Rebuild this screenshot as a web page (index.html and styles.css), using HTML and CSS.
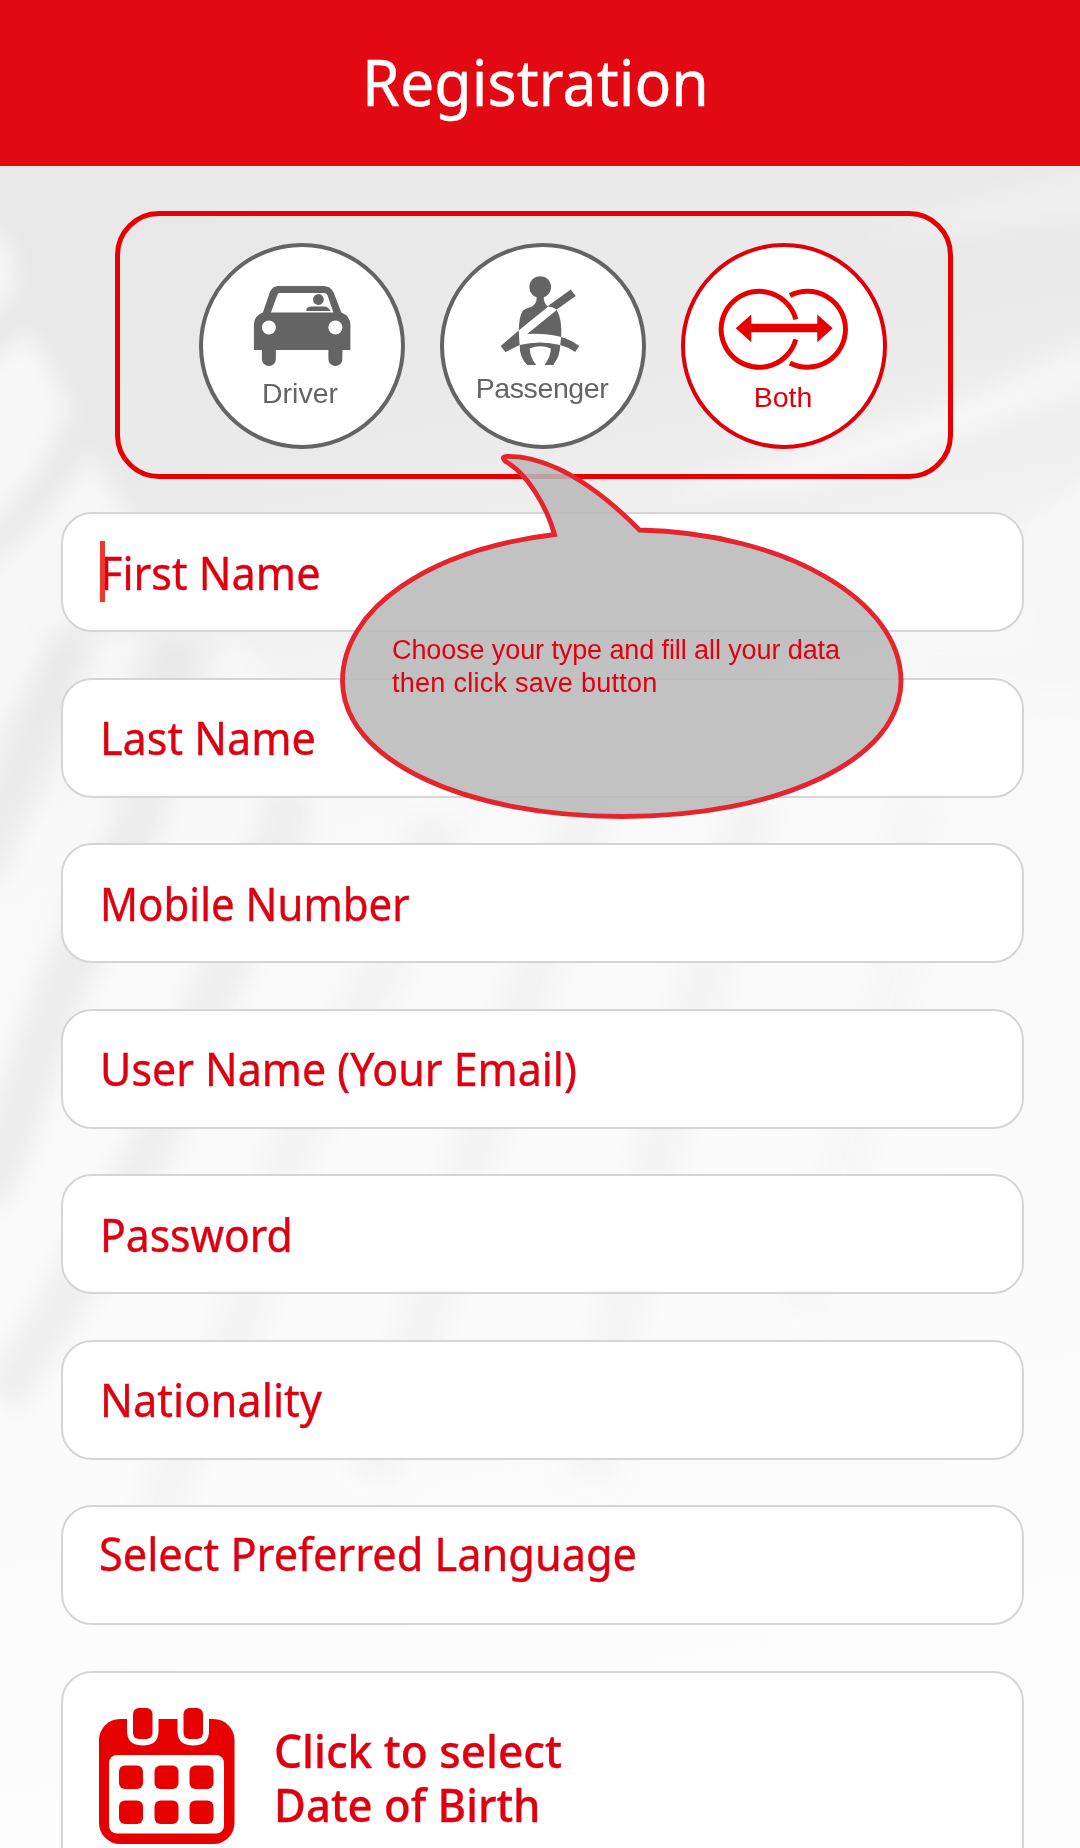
FILE: index.html
```html
<!DOCTYPE html>
<html lang="en">
<head>
<meta charset="utf-8">
<title>Registration</title>
<link rel="stylesheet" href="styles.css">
</head>
<body>
<div class="screen">
  <svg class="backdrop" viewBox="0 0 1080 1848" aria-hidden="true">
    <defs>
      <linearGradient id="base" x1="0" y1="0" x2="0.12" y2="1">
        <stop offset="0" stop-color="#e7e7e7"/>
        <stop offset="0.27" stop-color="#eaeaea"/>
        <stop offset="0.37" stop-color="#f1f1f1"/>
        <stop offset="0.45" stop-color="#f9f9f9"/>
        <stop offset="1" stop-color="#fdfdfd"/>
      </linearGradient>
      <filter id="soft" filterUnits="userSpaceOnUse" x="-60" y="100" width="1200" height="1800"><feGaussianBlur stdDeviation="11"/></filter>
    </defs>
    <rect width="1080" height="1848" fill="url(#base)"/>
    <g filter="url(#soft)">
      <g fill="#f7f7f7">
        <path d="M-20 225L8 240L16 290L-20 330Z"/>
        <path d="M30 330L70 408L40 470L-20 540V370Z"/>
        <path d="M90 455L130 520L60 640L-20 760V580L50 510Z"/>
        <path d="M85 640L145 632L120 690L70 700Z"/>
        <path d="M205 680L230 632L290 690Z"/>
        <path d="M1100 335L970 395L800 450L640 500L800 490L960 440L1100 385Z" opacity=".8"/>
        <path d="M1100 170L960 205L860 240L1100 215Z" opacity=".5"/>
        <path d="M1100 470L1020 530V700H1100Z"/>
        <path d="M920 640H1100V690H900Z"/>
      </g>
      <g fill="none" stroke="#e5e5e5" stroke-width="48">
        <path d="M75 635L20 770L-20 870" opacity=".6"/>
        <path d="M180 640L140 820L62 985L5 1150L-20 1200" opacity=".65"/>
        <path d="M286 790V820L217 985L150 1150L55 1316L0 1400" opacity=".5"/>
        <path d="M440 820L375 985L290 1150L244 1316L169 1480L140 1600" opacity=".32"/>
        <path d="M590 800L530 985L475 1150L425 1316L370 1480" opacity=".32"/>
        <path d="M755 800L702 985L658 1150L620 1316L590 1480" opacity=".25"/>
        <path d="M915 800L895 985L850 1150L800 1316" opacity=".15"/>
      </g>
    </g>
  </svg>

  <header class="header"><h1 class="title">Registration</h1></header>

  <main class="content">
    <section class="types">
      <button class="type">
        <svg class="ring" viewBox="0 0 206 206"><g fill="#646464" transform="translate(-.6 0)">
          <path fill-rule="evenodd" d="M80 43H125Q132 43 135 49L143 69.500Q152 73 152 82V107H144V116A7 7 0 0 1 130 116V107H77.500V116A7 7 0 0 1 63.500 116V107H55.500V82Q55.500 73 64.500 69.500L71.500 49Q74 43 80 43ZM81 50Q79.500 50 79 52L72.500 69.500H135L129 52Q128 50 126 50ZM70.500 77.500A7 7 0 1 0 70.500 91.500A7 7 0 1 0 70.500 77.500ZM137 77.500A7 7 0 1 0 137 91.500A7 7 0 1 0 137 77.500Z"/>
          <circle cx="120" cy="56.500" r="5.400"/><path d="M108 68V66Q109 63.500 113 63.500H126Q130 63.500 132 68Z"/></g></svg>
        <span class="type-label driver">Driver</span>
      </button>
      <button class="type">
        <svg class="ring" viewBox="0 0 206 206"><g fill="#646464" transform="translate(-.8 0)">
          <circle cx="101" cy="44" r="10.800"/>
          <path d="M97.500 52H104.500Q104 61 109 63.500L79.500 87.500Q80 74 83 68.500Q86 65 92 64Q97.500 61 97.500 55Z"/>
          <path d="M108 63.500L131.500 46.500L136.500 53L117.500 66.500Q112 63 108 63.500Z"/>
          <path d="M117.500 67Q123 76 122 94Q106 90 88 91Z"/>
          <path d="M79.500 87.500Q80 97 80.500 102L66 109L61.500 103Z"/>
          <path d="M122 94Q132 97 140 103L136 109Q129 104 121 102Z"/>
          <path d="M80.500 102Q101 97 121 102Q121 113 114 122H105.500Q112 112 111.500 105.500Q101 101 90.500 105.500Q91 115 97 122H88Q80 114 80.500 102Z"/></g></svg>
        <span class="type-label passenger">Passenger</span>
      </button>
      <button class="type selected">
        <svg class="ring" viewBox="0 0 206 206"><g fill="none" stroke="#e60000" stroke-width="5">
          <path d="M114.800 76.300A38 38 0 1 0 114.800 96.300"/><path d="M109 52.500A38 38 0 1 1 109 120"/></g>
          <path fill="#e60000" d="M54.700 85.300L70.300 71.500V80.700H136.300V71.500L151.700 85.300L136.300 99.200V89.300H70.300V99.200Z"/></svg>
        <span class="type-label both">Both</span>
      </button>
    </section>

    <form class="fields">
      <div class="field"><span class="label first">First Name</span><i class="caret"></i></div>
      <div class="field"><span class="label last">Last Name</span></div>
      <div class="field"><span class="label mobile">Mobile Number</span></div>
      <div class="field"><span class="label user">User Name (Your Email)</span></div>
      <div class="field"><span class="label pass">Password</span></div>
      <div class="field"><span class="label nation">Nationality</span></div>
      <div class="field language"><span class="label lang">Select Preferred Language</span></div>
      <div class="field date">
        <svg class="calendar" viewBox="0 0 136 136">
          <rect y="11" width="135.500" height="125" rx="21" fill="#e60000"/>
          <path d="M28 8H59.500V23Q59.500 37.500 43.800 37.500T28 23ZM78.500 8H110V23Q110 37.500 94.300 37.500T78.500 23Z" fill="#fff"/>
          <g fill="#e60000"><rect x="34" width="19.500" height="31" rx="6"/><rect x="84.500" width="19.500" height="31" rx="6"/></g>
          <rect x="10" y="47" width="115" height="78.500" rx="8" fill="#fff"/>
          <g fill="#e60000"><rect x="20" y="57.500" width="24" height="23.500" rx="6"/><rect x="55.500" y="57.500" width="24" height="23.500" rx="6"/><rect x="90.500" y="57.500" width="24" height="23.500" rx="6"/><rect x="20" y="92.500" width="24" height="23.500" rx="6"/><rect x="55.500" y="92.500" width="24" height="23.500" rx="6"/><rect x="90.500" y="92.500" width="24" height="23.500" rx="6"/></g>
        </svg>
        <div class="date-text"><div class="line1">Click to select</div><div class="line2">Date of Birth</div></div>
      </div>
    </form>
  </main>

  <aside class="tip">
    <svg class="bubble" viewBox="330 440 590 390">
      <path d="M554.500 534.500C547 507 527 473 505.500 461.500Q500 456 508 456.300C548 456 594 484 639.500 530C784 533 901 600 901 681C901 761 777 816.500 622 816.500C467 816.500 342.500 761 342.500 681C342.500 609 428 550 554.500 534.500Z" fill="#b9b9b9" fill-opacity=".87" stroke="#e5242d" stroke-width="4.800"/>
    </svg>
    <div class="tip-text"><div class="tip1">Choose your type and fill all your data</div><div class="tip2">then click save button</div></div>
  </aside>
</div>
</body>
</html>
```
FILE: styles.css
```css
* { box-sizing: border-box; }
body { margin: 0; font-family: "Noto Sans", sans-serif; }
.screen { position: relative; width: 1080px; height: 1848px; overflow: hidden; background: #f7f7f7; }
.backdrop { position: absolute; inset: 0; width: 100%; height: 100%; }
.header { position: relative; height: 165.500px; background: #e30913; text-align: center; padding-right: 9px; }
.title { margin: 0; color: #fff; font-size: 63px; font-weight: 400; line-height: 164px; transform: scaleX(.967); -webkit-text-stroke: .4px #fff; }
.content { position: relative; }
.types { display: flex; gap: 35px; width: 838px; height: 268px; margin: 45.500px 0 0 115px; padding: 27px 0 0 79px; border: 5px solid #e60000; border-radius: 44px; }
.type { position: relative; flex: none; width: 206px; height: 206px; padding: 0; border: 4px solid #646464; border-radius: 50%; background: #fff; color: #646464; }
.type.selected { border-color: #e10008; color: #e10008; }
.ring { display: block; width: 206px; height: 206px; margin: -4px; }
.type-label { position: absolute; left: 0; right: 0; font: 28.500px/32px "Liberation Sans", sans-serif; text-align: center; }
.driver { top: 129.500px; left: -4px; }
.passenger { top: 124.500px; left: -2px; letter-spacing: -.4px; }
.both { top: 133.500px; left: -2px; }
.fields { display: flex; flex-direction: column; gap: 45.570px; margin: 33px 56px 0 61px; }
.field { flex: none; display: flex; align-items: center; height: 120px; padding: 0 0 0 37px; border: 2px solid #d5d5d5; border-radius: 31px; background: #fff; color: #de0010; font-size: 45px; position: relative; }
.label { white-space: pre; line-height: 60px; padding-top: 1px; transform-origin: 0 50%; -webkit-text-stroke: .4px #de0010; }
.first { transform: scaleX(.959); }
.last { transform: scaleX(.958); }
.mobile { transform: scaleX(.933); }
.user { transform: scaleX(.954); }
.pass { transform: scaleX(.947); }
.nation { transform: scaleX(.965); }
.lang { transform: scaleX(.962); }
.caret { position: absolute; left: 37px; top: 27px; width: 5px; height: 61px; background: #ed3a2d; }
.language { padding: 0 0 23px 36px; }
.date { height: 220px; align-items: flex-start; padding-top: 35px; padding-left: 36px; }
.calendar { width: 136px; height: 136px; flex: none; }
.date-text { margin: 16px 0 0 39px; font-size: 45px; line-height: 54px; font-weight: 500; -webkit-text-stroke: .3px #de0010; }
.line1, .line2 { transform-origin: 0 50%; transform: scaleX(.982); }
.line2 { transform: scaleX(.97); }
.tip { position: absolute; left: 330px; top: 440px; width: 590px; height: 390px; }
.bubble { display: block; width: 590px; height: 390px; }
.tip-text { position: absolute; left: 62px; top: 194px; color: #e10010; font: 27px/32.500px "Liberation Sans", sans-serif; white-space: nowrap; }
.tip1 { letter-spacing: -.1px; }
.tip2 { letter-spacing: .27px; }
```
